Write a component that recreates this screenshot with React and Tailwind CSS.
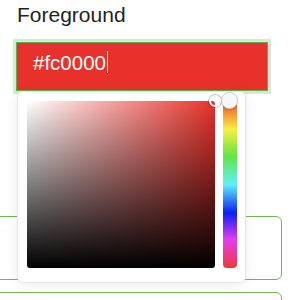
import React from "react";

export default function App() {
  return (
    <div className="relative w-[302px] h-[300px] overflow-hidden bg-white font-['Liberation_Sans',Arial,sans-serif]">
      <div className="pl-[17px] pt-[3px] text-[21px] leading-[24px] text-[#1f1f1f]">Foreground</div>
      <div className="ml-[16px] mt-[15px] w-[252px] h-[49px] border border-[#5fb04f] bg-[#e8312a] ring-[3px] ring-[#d3ebcf] pl-[16px] pt-[8px] text-white text-[20.5px] leading-[24px] flex items-start">
        <span>#fc0000</span>
        <span className="ml-[1px] mt-[0px] w-px h-[22px] bg-white/90"></span>
      </div>
      <div className="-ml-[10px] mt-[125px] w-[292px] h-[64px] rounded-[6px] border border-[#74b552]"></div>
      <div className="-ml-[10px] mt-[12px] w-[292px] h-[64px] rounded-[6px] border border-[#74b552]"></div>

      <div className="absolute left-[17px] top-[91px] w-[229px] h-[192px] rounded-[6px] bg-white border border-[#e3e5e9] shadow-[0_2px_14px_rgba(0,0,0,0.07)] flex gap-[8px] pl-[9px] pt-[9px] pr-[8px]">
        <div className="relative w-[188px] h-[167px] rounded-[3px] bg-[linear-gradient(to_top,#000,rgba(0,0,0,0)),linear-gradient(to_right,#fff,#e8312a)]">
          <div className="absolute -right-[6px] -top-[6px] w-[12px] h-[12px] rounded-full border-2 border-white shadow-[0_0_0_1px_rgba(0,0,0,0.25)]"></div>
        </div>
        <div className="relative w-[14px] h-[167px] rounded-[4px] bg-[linear-gradient(to_bottom,#f04a2a,#f7f045_17%,#62e640_33%,#5ff0f8_50%,#0b1ef4_67%,#e43cf0_83%,#ef3a3a)]">
          <div className="absolute left-[-2px] -top-[9px] w-[17px] h-[17px] rounded-full bg-[#f7f7f7] border border-[#cfcfcf] shadow-[0_1px_2px_rgba(0,0,0,0.15)]"></div>
        </div>
      </div>
    </div>
  );
}
